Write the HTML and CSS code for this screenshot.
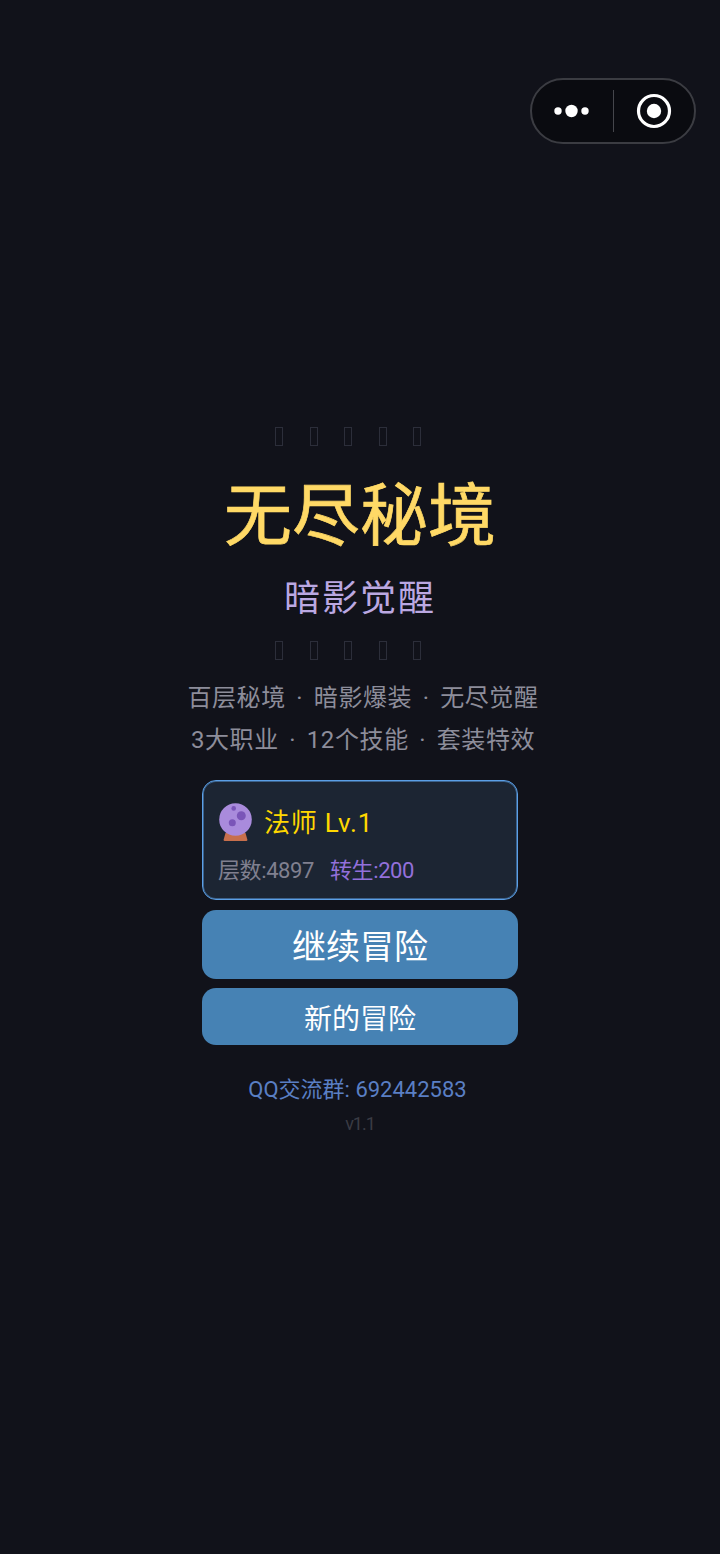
FILE: index.html
```html
<!DOCTYPE html>
<html lang="zh">
<head>
<meta charset="utf-8">
<title>无尽秘境</title>
<link rel="stylesheet" href="styles.css">
</head>
<body>
<div class="capsule">
  <div class="capsule-part">
    <svg class="dots" width="36" height="14" viewBox="0 0 36 14"><circle cx="4" cy="7" r="3.700" fill="#fff"/><circle cx="17.500" cy="7" r="6.200" fill="#fff"/><circle cx="31" cy="7" r="3.700" fill="#fff"/></svg>
  </div>
  <div class="capsule-line"></div>
  <div class="capsule-part">
    <svg width="36" height="36" viewBox="0 0 36 36"><circle cx="18" cy="18" r="15.500" fill="none" stroke="#fff" stroke-width="3.200"/><circle cx="18" cy="18" r="7.200" fill="#fff"/></svg>
  </div>
</div>
<main class="main">
  <div class="tofu-row"><i></i><i></i><i></i><i></i><i></i></div>
  <h1 class="title">无尽秘境</h1>
  <h2 class="subtitle">暗影觉醒</h2>
  <div class="tofu-row tofu-row-low"><i></i><i></i><i></i><i></i><i></i></div>
  <p class="desc desc-first">百层秘境 · 暗影爆装 · 无尽觉醒</p>
  <p class="desc">3大职业 · 12个技能 · 套装特效</p>
  <section class="card">
    <div class="card-head">
      <svg class="orb" width="34" height="39" viewBox="0 0 34 39">
        <path d="M6.500 30h20l1.800 6.500q.4 1.500-1.100 1.500H5.800q-1.500 0-1.100-1.500z" fill="#c76f4c"/>
        <circle cx="16.500" cy="16.500" r="16.300" fill="#a98bdc"/>
        <circle cx="22.300" cy="12.700" r="4.500" fill="#7a55b8"/>
        <circle cx="13.300" cy="19.700" r="3.500" fill="#7a55b8"/>
        <circle cx="14.700" cy="5.400" r="2.300" fill="#7a55b8"/>
      </svg>
      <span class="name">法师 Lv.1</span>
    </div>
    <div class="stats"><span>层数:4897</span><span class="rebirth">转生:200</span></div>
  </section>
  <button class="btn btn-big">继续冒险</button>
  <button class="btn btn-small">新的冒险</button>
  <p class="qq">QQ交流群: 692442583</p>
  <p class="version">v1.1</p>
</main>
</body>
</html>
```
FILE: styles.css
```css
* { box-sizing: border-box; margin: 0; padding: 0; }
html, body { width: 720px; height: 1554px; overflow: hidden; }
body {
  background: #11121a;
  font-family: Roboto, "Noto Sans CJK SC", sans-serif;
}
.capsule {
  position: absolute;
  left: 530px;
  top: 78px;
  width: 166px;
  height: 66px;
  display: flex;
  align-items: center;
  background: #0a0b10;
  border: 2px solid #3b3c42;
  border-radius: 33px;
}
.capsule-part { flex: 1; display: flex; justify-content: center; align-items: center; }
.capsule-line { width: 1px; height: 42px; background: #45464c; }
.main {
  display: flex;
  flex-direction: column;
  align-items: center;
  padding-top: 427px;
}
.tofu-row { display: flex; gap: 26.500px; height: 19px; margin-right: 24px; }
.tofu-row i { display: block; width: 8px; height: 19px; border: 1px solid #2c2e3a; }
.title {
  margin-top: 25px;
  font-size: 68px;
  line-height: 92px;
  font-weight: 400;
  -webkit-text-stroke: .7px #ffd966;
  color: #ffd966;
}
.subtitle {
  margin-top: 11px;
  font-size: 36px;
  line-height: 50px;
  font-weight: 400;
  letter-spacing: 2px;
  color: #bba8e2;
}
.tofu-row-low { margin-top: 17px; }
.desc {
  padding-left: 6px;
  font-size: 24px;
  line-height: 42px;
  letter-spacing: .6px;
  word-spacing: 4px;
  color: #8d8d9a;
  white-space: pre;
}
.desc-first { margin-top: 17px; }
.card {
  width: 316px;
  height: 120px;
  margin-top: 19px;
  padding: 22px 16px 0;
  background: #1c2533;
  border: 1px solid #5b9fe6;
  border-radius: 14px;
  box-shadow: inset 0 0 0 1px rgba(91, 159, 230, .5);
}
.card-head { display: flex; align-items: center; gap: 11px; height: 39px; }
.orb { flex: none; }
.name { font-size: 26px; line-height: 36px; letter-spacing: .8px; color: #ffd700; }
.stats {
  display: flex;
  gap: 16px;
  margin-top: 14px;
  margin-left: -1px;
  font-size: 22px;
  line-height: 30px;
  letter-spacing: -.4px;
  color: #808090;
}
.rebirth { color: #9370db; }
.btn {
  display: block;
  width: 316px;
  border: 0;
  border-radius: 14px;
  background: #4682b4;
  color: #fff;
  font-family: inherit;
  font-weight: 400;
}
.btn-big { height: 69px; margin-top: 10px; font-size: 34px; }
.btn-small { height: 57px; margin-top: 9px; font-size: 28px; }
.qq {
  margin-top: 30px;
  margin-right: 5px;
  font-size: 22px;
  line-height: 30px;
  color: #5a7fc4;
}
.version {
  margin-top: 5px;
  font-size: 18px;
  line-height: 28px;
  letter-spacing: -1px;
  color: #3a3b44;
}
```
